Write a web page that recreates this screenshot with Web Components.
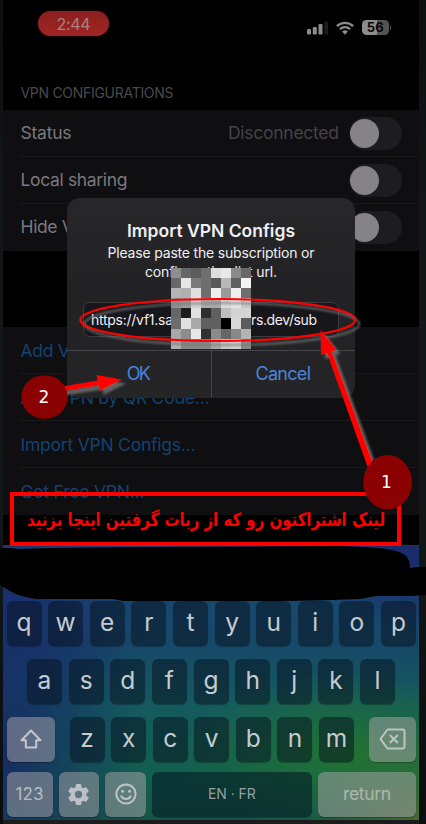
<!DOCTYPE html>
<html lang="en">
<head>
<meta charset="utf-8">
<title>Import VPN Configs</title>
<style>
html,body{margin:0;background:#101617}
body{width:426px;height:824px;overflow:hidden;font-family:Inter,"Liberation Sans",sans-serif}
</style>
</head>
<body>
<phone-screen></phone-screen>
<script>
const define = (name, html, setup) => customElements.define(name, class extends HTMLElement {
  constructor() {
    super();
    this.attachShadow({ mode: 'open' });
  }
  connectedCallback() {
    const t = document.createElement('template');
    t.innerHTML = typeof html === 'function' ? html(this) : html;
    this.shadowRoot.replaceChildren(t.content.cloneNode(true));
    if (setup) setup(this);
  }
});

/* A one-line label whose tracking is tuned to a given width. */
define('fit-text', '<style>:host{display:inline-block;white-space:pre;line-height:1}span{display:inline-block}</style><span></span>', el => {
  const s = el.shadowRoot.querySelector('span');
  const text = el.getAttribute('text');
  s.textContent = text;
  const w = parseFloat(el.getAttribute('w'));
  if (w) {
    const natural = s.getBoundingClientRect().width;
    s.style.letterSpacing = ((w - natural) / (text.length - 1)).toFixed(3) + 'px';
    el.style.width = w + 'px';
  }
});

define('status-bar', `<style>
:host{display:flex;box-sizing:border-box;height:80px;padding:11px 28px 0 35px;justify-content:space-between;align-items:flex-start}
.time{width:71px;height:25px;border-radius:13px;background:linear-gradient(#8a201e,#a02624);color:#a8827f;font-size:16px;display:flex;align-items:center;justify-content:center;box-shadow:0 0 2px #5a1514}
.right{display:flex;align-items:center;gap:8px;padding-top:9px}
.bat{width:27px;height:15px;border-radius:4.5px;background:linear-gradient(90deg,#8d8b8e 57%,#545355 57%);color:#080808;font-size:13px;font-weight:700;display:flex;align-items:center;justify-content:center}
.pack{display:flex;align-items:center;gap:1px}.nub{width:1.3px;height:5px;background:#555;border-radius:0 2px 2px 0}
</style>
<div class="time"><fit-text text="2:44" w="34"></fit-text></div>
<div class="right">
<svg width="21" height="15" viewBox="0 0 21 15"><g fill="#8d8b8e"><rect y="9" width="4" height="5.5" rx="1.2"/><rect x="5.8" y="7" width="4" height="7.5" rx="1.2"/><rect x="11.5" y="4" width="4" height="10.5" rx="1.2"/></g><rect x="17.3" y="1.5" width="4" height="13" rx="1.2" fill="#1d1d1e"/></svg>
<svg width="18" height="14" viewBox="0 0 18 14"><g fill="none" stroke="#8d8b8e" stroke-width="2.3"><path d="M.9 5.1a11.8 11.8 0 0 1 16.2 0"/><path d="M3.9 8.2a7.5 7.5 0 0 1 10.2 0"/></g><path d="M6.1 10.5a4.3 4.3 0 0 1 5.8 0L9 13.7z" fill="#8d8b8e"/></svg>
<div class="pack"><div class="bat"><fit-text text="56" w="17"></fit-text></div><div class="nub"></div></div>
</div>`);

define('toggle-switch', `<style>
:host{display:block;box-sizing:border-box;width:53px;height:33px;border-radius:17px;background:#1d1c20;padding:2px 1px}
i{display:block;width:29px;height:29px;border-radius:50%;background:#858385}
</style><i></i>`);

define('list-group', '<style>:host{display:block;background:#0f0e10}</style><slot></slot>');

define('list-row', `<style>
:host{display:flex;position:relative;box-sizing:border-box;height:47px;padding:0 17px 0 17.5px;align-items:center;color:#7b797e;font-size:17.5px}
:host([link]){color:#14426f}
:host(:not([last]))::after{content:"";position:absolute;left:17px;right:0;bottom:0;height:1px;background:#19181a}
::slotted(:last-child:not(:first-child)){margin-left:10px}
.sp{flex:1}
</style><slot name="label"></slot><div class="sp"></div><slot></slot>`);

define('alert-dialog', `<style>
:host{display:flex;flex-direction:column;box-sizing:border-box;width:288px;height:199.5px;border-radius:13px;background:linear-gradient(#272629,#222124 50%,#252528);color:#f0eff1;overflow:hidden}
.body{height:152px;box-sizing:border-box;padding:24px 16px 0;display:flex;flex-direction:column;align-items:center}
.title{font-size:17.5px;font-weight:600;height:17px}
.l1{font-size:14px;margin-top:7px;height:14px}.l2{font-size:14px;margin-top:5px;height:14px}
.field{width:256px;height:35px;box-sizing:border-box;border:1px solid #3c3c40;border-radius:7px;background:#17161b;margin-top:23px;padding:0 7px;display:flex;align-items:center;font-size:14px;justify-content:flex-start}
.btns{height:47px;box-sizing:border-box;border-top:1px solid #454549;display:flex;color:#4985da;font-size:18px}
.btns div{flex:1;display:flex;align-items:center;justify-content:center}
.btns div+div{border-left:1px solid #454549}
</style>
<div class="body">
<fit-text class="title" text="Import VPN Configs" w="168"></fit-text>
<fit-text class="l1" text="Please paste the subscription or" w="207"></fit-text>
<fit-text class="l2" text="configuration list url." w="132"></fit-text>
<div class="field"><fit-text text="https://vf1.sa" w="82"></fit-text><fit-text style="margin-left:78px" text="rs.dev/sub" w="66"></fit-text></div>
</div>
<div class="btns"><div><fit-text text="OK" w="24"></fit-text></div><div><fit-text text="Cancel" w="55.5"></fit-text></div></div>`);

define('key-cap', el => `<style>
:host{display:flex;box-sizing:border-box;height:45px;border-radius:6px;align-items:center;justify-content:center;background:rgba(7,18,32,.53);color:#c5cbd0;font-size:24.5px;box-shadow:0 1px 1px rgba(0,0,0,.28);width:${el.getAttribute('w') || 35}px;line-height:1;padding-bottom:2px}
:host([light]){background:rgba(170,163,169,.5);color:#b9bbc0;padding-bottom:0}
:host([space]){background:rgba(4,24,35,.58);font-size:14px;color:#989fa2;padding-bottom:0}
</style><slot></slot>`);

define('key-board', () => {
  const row = s => [...s].map(c => `<key-cap>${c}</key-cap>`).join('');
  return `<style>
:host{display:block;box-sizing:border-box;height:275px;padding:55.5px 3px 0 3.5px;background:
radial-gradient(ellipse 170px 80px at 345px 208px,rgba(34,116,48,.95),rgba(34,116,48,0)),
radial-gradient(ellipse 110px 100px at 100% 100%,rgba(78,104,52,.95),rgba(62,104,52,0)),
radial-gradient(ellipse 110px 85px at 100% 0,#1a2c6c 30%,rgba(26,44,108,0)),
radial-gradient(ellipse 140px 200px at 0 75%,rgba(22,40,100,.95),rgba(22,60,105,0)),
radial-gradient(ellipse 150px 140px at 0 20%,rgba(24,48,112,.95),rgba(24,58,105,0)),
linear-gradient(180deg,#1b4677 0,#164868 35%,#145a5e 58%,#12604e 85%,#175446)}
.r{display:flex;height:45px;justify-content:space-between}
.r2{margin:13px 21px 0 20.5px}.r3{margin-top:13px}.r4{margin-top:10px}
.mid{display:flex;width:284.5px;justify-content:space-between}
</style>
<div class="r">${row('qwertyuiop')}</div>
<div class="r r2">${row('asdfghjkl')}</div>
<div class="r r3"><key-cap light w="48"><svg width="22" height="21" viewBox="0 0 22 21" fill="none" stroke="#c4c7ce" stroke-width="2" stroke-linejoin="round"><path d="M11 1.5 1.5 11.2h4.3v7.3h10.4v-7.3h4.3z"/></svg></key-cap>
<div class="mid">${row('zxcvbnm')}</div>
<key-cap light w="47"><svg width="27" height="22" viewBox="0 0 27 22" fill="none" stroke="#bdc5c3" stroke-width="2" stroke-linejoin="round"><path d="M8.5 1.5h15a2 2 0 0 1 2 2v15a2 2 0 0 1-2 2h-15L1.5 11zM10.8 7l8 8m0-8-8 8"/></svg></key-cap></div>
<div class="r r4">
<key-cap light w="46"><fit-text style="font-size:17px" text="123" w="28"></fit-text></key-cap>
<key-cap light w="40.5"><svg width="25" height="25" viewBox="0 0 24 24" fill="#bcc1c7"><path d="M19.43 12.98c.04-.32.07-.64.07-.98s-.03-.66-.07-.98l2.11-1.65c.19-.15.24-.42.12-.64l-2-3.46c-.12-.22-.39-.3-.61-.22l-2.49 1c-.52-.4-1.08-.73-1.69-.98l-.38-2.65C14.46 2.18 14.25 2 14 2h-4c-.25 0-.46.18-.49.42l-.38 2.65c-.61.25-1.17.59-1.69.98l-2.49-1c-.23-.09-.49 0-.61.22l-2 3.46c-.13.22-.07.49.12.64l2.11 1.65c-.04.32-.07.65-.07.98s.03.66.07.98l-2.11 1.65c-.19.15-.24.42-.12.64l2 3.46c.12.22.39.3.61.22l2.49-1c.52.4 1.08.73 1.69.98l.38 2.65c.03.24.24.42.49.42h4c.25 0 .46-.18.49-.42l.38-2.65c.61-.25 1.17-.59 1.69-.98l2.49 1c.23.09.49 0 .61-.22l2-3.46c.12-.22.07-.49-.12-.64zM12 15.5a3.5 3.5 0 1 1 0-7 3.5 3.5 0 0 1 0 7z"/></svg></key-cap>
<key-cap light w="40.5"><svg width="22" height="22" viewBox="0 0 22 22" fill="none" stroke="#bcc3c7" stroke-width="2" stroke-linecap="round"><circle cx="11" cy="11" r="9.6"/><path d="M6.3 13.2c1.8 3.6 7.6 3.6 9.4 0"/><g fill="#bcc3c7" stroke="none"><circle cx="7.5" cy="8.2" r="1.5"/><circle cx="14.5" cy="8.2" r="1.5"/></g></svg></key-cap>
<key-cap space w="160"><fit-text text="EN · FR" w="48"></fit-text></key-cap>
<key-cap light w="98"><fit-text style="font-size:17.5px;color:#b0b7ac" text="return" w="48"></fit-text></key-cap>
</div>`;
});

/* Greyscale 8x8 blocks that hide part of the address. */
define('pixel-mosaic', () => {
  const g = '8e665c6ede e88a68 68e67a6e5ab860f4 b4b0e06eee9aee6e 9099d0aaa8d8e4c8 661ce02e60bdd4d4 6ce0aa606000d85c a88ce8308a6688b4 b0888888aac8d088'.replace(/ /g, '').match(/../g);
  return `<style>:host{display:grid;grid-template:repeat(8,10.1px)/repeat(8,10px);width:80px}</style>` + g.map(c => `<i style="background:#${c}${c}${c}"></i>`).join('');
});

define('markup-layer', `<style>:host{display:block;pointer-events:none}svg{display:block}
text{font-family:"DejaVu Sans","Liberation Sans",sans-serif}</style>
<svg width="426" height="824" viewBox="0 0 426 824">
<defs><filter id="s" x="-20%" y="-30%" width="150%" height="180%"><feDropShadow dx="4" dy="4" stdDeviation="1" flood-color="#777" flood-opacity=".75"/></filter></defs>
<path fill="#000" d="M0 548H12L18 549 50 548 130 547 340 546 362 547C385 548 400 550 406 556Q410 560 410 568L418 567H426V595L410 596H376L360 599 315 600.5 280 601H123L113 599 37 599Q20 597 10 591L0 585Z"/>
<ellipse cx="217.8" cy="320" rx="137.4" ry="21" fill="none" stroke="red" stroke-width="2.2" filter="url(#s)"/>
<path fill="red" filter="url(#s)" d="M320.5 330 336.5 349.8 331.7 351.3 374 466 368 468 327 353 321 355.3Z"/>
<path fill="red" filter="url(#s)" d="M122 379.5 99.5 391 98.5 385.5 60 391.5 59 387 97.6 380.5 96.5 375Z"/>
<rect x="12" y="494" width="387" height="50" fill="none" stroke="red" stroke-width="4"/>
<text x="206" y="525.5" text-anchor="middle" direction="rtl" xml:lang="fa" font-size="18.5" font-weight="700" fill="red" textLength="358" lengthAdjust="spacingAndGlyphs">لینک اشتراکتون رو که از ربات گرفتین اینجا بزنید</text>
<g fill="#8b0000"><ellipse cx="44.5" cy="397" rx="23.2" ry="21.8"/><ellipse cx="387.6" cy="482.3" rx="24.3" ry="27.3"/></g>
<g fill="#fff" font-size="17" text-anchor="middle"><text x="44" y="402.5">2</text><text x="386.5" y="488">1</text></g>
</svg>`);

define('phone-screen', `<style>
:host{display:block;position:relative;box-sizing:border-box;width:426px;height:824px;padding:0 7px 0 3px;overflow:hidden;background:linear-gradient(#0a0f10,#121819 30%,#111617 70%,#0b0c0e)}
.screen{background:#000;height:820px;display:flex;flex-direction:column}
.head{height:29.5px;padding:5.5px 0 0 17.5px;box-sizing:border-box;color:#4b494d;font-size:14px;line-height:14px}
.gap{height:76.5px}key-board{margin-top:auto}
.base{height:4px;background:#1d1c1d}
alert-dialog{position:absolute;left:67px;top:198px}
pixel-mosaic{position:absolute;left:171px;top:268px}
markup-layer{position:absolute;left:0;top:0}
</style>
<div class="screen">
<status-bar></status-bar>
<div class="head"><fit-text text="VPN CONFIGURATIONS" w="153"></fit-text></div>
<list-group>
<list-row><fit-text slot="label" text="Status" w="51"></fit-text><fit-text text="Disconnected" w="111" style="color:#454347"></fit-text><toggle-switch></toggle-switch></list-row>
<list-row><fit-text slot="label" text="Local sharing" w="107"></fit-text><toggle-switch></toggle-switch></list-row>
<list-row last><fit-text slot="label" text="Hide VPN icon" w="115"></fit-text><toggle-switch></toggle-switch></list-row>
</list-group>
<div class="gap"></div>
<list-group>
<list-row link><fit-text slot="label" text="Add VPN" w="73"></fit-text></list-row>
<list-row link><fit-text slot="label" text="Add VPN by QR Code..." w="189"></fit-text></list-row>
<list-row link><fit-text slot="label" text="Import VPN Configs..." w="175"></fit-text></list-row>
<list-row link last><fit-text slot="label" text="Get Free VPN..." w="124"></fit-text></list-row>
</list-group>
<key-board></key-board>
</div>
<div class="base"></div>
<alert-dialog></alert-dialog>
<pixel-mosaic></pixel-mosaic>
<markup-layer></markup-layer>`);
</script>
</body>
</html>
